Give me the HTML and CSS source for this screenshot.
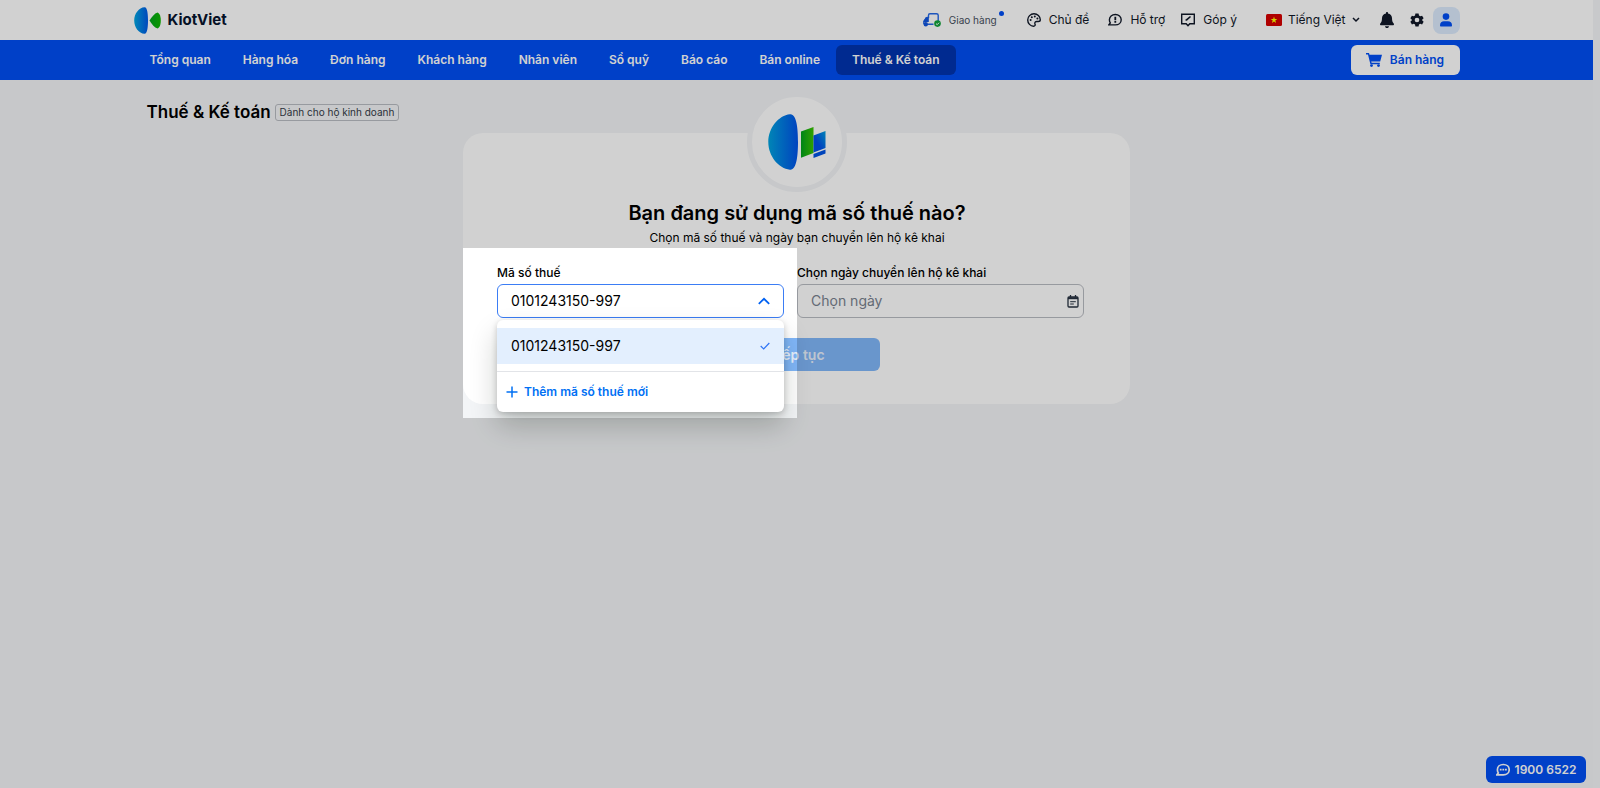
FILE: index.html
```html
<!DOCTYPE html>
<html lang="vi">
<head>
<meta charset="utf-8">
<meta name="viewport" content="width=device-width, initial-scale=1">
<title>KiotViet - Thuế &amp; Kế toán</title>
<link rel="stylesheet" href="styles.css">
</head>
<body>
<div class="page">
  <header class="topbar">
    <div class="container topbar-inner">
      <a class="brand" href="#">
        <svg class="brand-mark" viewBox="0 0 27 27" aria-hidden="true">
          <defs>
            <linearGradient id="blue" x1="0" x2="1"><stop offset="0" stop-color="#00a6e0"/><stop offset="1" stop-color="#0058e8"/></linearGradient>
            <linearGradient id="green" x1="0" x2="1"><stop offset="0" stop-color="#00a51d"/><stop offset="1" stop-color="#10b800"/></linearGradient>
          </defs>
          <path fill="url(#blue)" d="M10.500 .2C13.500 0 14 8 14 13.500s-.5 13.500-3.500 13.300C5 26.500.2 20.500.2 13.500S5 .5 10.500.2z"/>
          <path fill="url(#green)" d="M15.500 13.500c2.500-4 5-7 8-8 2.500 1 3.300 4.500 3.300 8s-.8 7-3.300 8c-3-1-5.500-4-8-8z"/>
        </svg>
        <span class="brand-name">KiotViet</span>
      </a>
      <nav class="tools" aria-label="Tiện ích">
        <a class="tool tool-small" href="#">
          <svg class="icon-truck" viewBox="0 0 18 14" fill="none" aria-hidden="true">
            <path stroke="#2468e6" stroke-width="1.400" d="M4.500 11.300h6M5.500 5V2.200C5.500 1.300 6 .8 7 .8h6.500c1.200 0 1.700.6 1.700 1.500V8M5.500 4.500H4.200C3 4.500 2.700 5 2.200 6.500L.8 8.500V11"/>
            <path fill="#1256df" d="M3 4.500h2.800V9H.8V7.800z"/>
            <circle cx="2.800" cy="11.300" r="2.200" fill="#1256df"/>
            <circle cx="14.500" cy="10.600" r="3.300" fill="#12a43b"/>
            <path stroke="#fff" d="m13 10.600 1.200 1.100 1.900-2"/>
          </svg>
          <span>Giao hàng</span><i class="dot"></i>
        </a>
        <a class="tool tool-theme" href="#">
          <svg class="icon14" viewBox="0 0 14 14" fill="none" stroke="currentColor" stroke-width="1.400" aria-hidden="true">
            <path d="M7 .8C3.500.8.7 3.600.7 7s2.800 6.200 5.800 6.200c1.600 0 1.900-1.200 1.500-2.200-.5-1.500.4-2.500 1.700-2.500h1.600c1.300 0 2-.7 2-1.800C13.200 3.400 10.500.8 7 .8z"/>
            <g fill="currentColor" stroke="none"><circle cx="3.600" cy="7" r="1"/><circle cx="4.800" cy="4.200" r="1"/><circle cx="7.800" cy="3.400" r="1"/><circle cx="10.400" cy="5.400" r="1"/></g>
          </svg>
          <span>Chủ đề</span>
        </a>
        <a class="tool" href="#">
          <svg class="icon14" viewBox="0 0 14 14" fill="none" stroke="currentColor" stroke-width="1.400" aria-hidden="true">
            <path d="M7.300 1.500c3.400 0 5.900 2.200 5.900 5.200s-2.500 5.200-5.900 5.200H.8l1.500-2C1.700 9 1.400 8 1.400 6.700c0-3 2.500-5.200 5.900-5.200z"/>
            <path stroke-width="1.800" d="M7.300 3.700V7.200M7.300 8v1.700"/>
          </svg>
          <span>Hỗ trợ</span>
        </a>
        <a class="tool" href="#">
          <svg class="icon14" viewBox="0 0 14 14" fill="none" stroke="currentColor" stroke-width="1.400" aria-hidden="true">
            <path d="M.7 1.200h12.600v9.600H8.800L7 12.800l-1.800-2H.7z"/>
            <path d="m4.500 8 .5-1.700 4-3.300 1 1-3.800 3.500z" fill="currentColor" stroke="none"/>
          </svg>
          <span>Góp ý</span>
        </a>
        <button class="tool language" type="button">
          <svg class="flag" viewBox="0 0 16 12" aria-hidden="true"><rect width="16" height="12" rx="1.500" fill="#d60000"/><path fill="#ff0" d="m8 2.600.8 2.400h2.500L9.300 6.500l.8 2.400L8 7.400 5.900 8.900l.8-2.400L4.700 5h2.500z"/></svg>
          <span>Tiếng Việt</span>
          <svg class="caret" viewBox="0 0 8 6" fill="none" stroke="currentColor" stroke-width="1.500" aria-hidden="true"><path d="m1 1 3 3 3-3"/></svg>
        </button>
        <button class="icon-button" type="button" aria-label="Thông báo">
          <svg class="icon16" viewBox="0 0 14 16" fill="#101828" aria-hidden="true"><path d="M7 0c.6 0 1 .4 1 1v.4c2.300.4 4 2.300 4 4.600 0 3 .6 4.300 1.700 5.400.6.700.2 1.800-.8 1.800H1.100c-1 0-1.400-1.100-.8-1.800C1.400 10.300 2 9 2 6c0-2.300 1.700-4.200 4-4.600V1c0-.6.400-1 1-1zM5 14.200h4c0 1-.9 1.800-2 1.800s-2-.8-2-1.800z"/></svg>
        </button>
        <button class="icon-button" type="button" aria-label="Thiết lập">
          <svg class="icon14" viewBox="0 0 24 24" fill="#101828" aria-hidden="true"><path fill-rule="evenodd" d="M9.300 1h5.400l.7 3.200 2.200 1.300 3.100-1 2.700 4.700-2.400 2.100v1.400l2.400 2.100-2.700 4.700-3.100-1-2.200 1.300-.7 3.200H9.300l-.7-3.200-2.200-1.300-3.100 1L.6 14.800 3 12.700v-1.400L.6 9.200l2.700-4.700 3.100 1 2.200-1.300zM12 8a4 4 0 1 0 0 8 4 4 0 0 0 0-8z"/></svg>
        </button>
        <button class="avatar" type="button" aria-label="Tài khoản">
          <svg class="icon14" viewBox="0 0 14 14" fill="#004ff5" aria-hidden="true"><circle cx="7" cy="3.600" r="3.300"/><path d="M1 12.200C1 9.800 2.700 8.200 5 8.200h4c2.300 0 4 1.600 4 4 0 .8-.3 1.300-1 1.300H2c-.7 0-1-.5-1-1.300z"/></svg>
        </button>
      </nav>
    </div>
  </header>

  <div class="navbar">
    <div class="container navbar-inner">
      <nav class="menu" aria-label="Chính">
        <a href="#">Tổng quan</a>
        <a href="#">Hàng hóa</a>
        <a href="#">Đơn hàng</a>
        <a href="#">Khách hàng</a>
        <a href="#">Nhân viên</a>
        <a href="#">Sổ quỹ</a>
        <a href="#">Báo cáo</a>
        <a href="#">Bán online</a>
        <a class="active" href="#">Thuế &amp; Kế toán</a>
      </nav>
      <button class="sell" type="button">
        <svg class="cart" viewBox="0 0 16 14" fill="currentColor" aria-hidden="true"><path d="M0 0h3l.5 1.700H16l-1.800 6.800H5.200l.4 1.300h8.200v1.400H4.400L2 1.400H0z"/><circle cx="5.500" cy="12.600" r="1.400"/><circle cx="12.500" cy="12.600" r="1.400"/></svg>
        <span>Bán hàng</span>
      </button>
    </div>
  </div>

  <main class="container content">
    <div class="heading">
      <h1>Thuế &amp; Kế toán</h1>
      <span class="tag">Dành cho hộ kinh doanh</span>
    </div>
    <section class="card">
      <div class="emblem">
        <svg viewBox="0 0 58 56" aria-hidden="true">
          <defs>
            <linearGradient id="blue-big" x1="0" x2="1"><stop offset="0" stop-color="#00a3df"/><stop offset="1" stop-color="#0052ea"/></linearGradient>
            <linearGradient id="green-big" x1="0" x2="1"><stop offset="0" stop-color="#00a21c"/><stop offset="1" stop-color="#3ac400"/></linearGradient>
            <linearGradient id="bar-blue" x1="0" y1="1" x2="1" y2="0"><stop offset="0.400" stop-color="#0050ea"/><stop offset="1" stop-color="#00a0df"/></linearGradient>
          </defs>
          <path fill="url(#blue-big)" d="M22 .3C28.500-.5 30 14 30 28s-1.500 28.500-8 27.700C10.500 54.500.3 42 .3 28S10.500 1.500 22 .3z"/>
          <path fill="url(#green-big)" d="M33 17.500 45.500 13v26L33 43.700z"/>
          <path fill="url(#bar-blue)" d="M45.500 21.500 57.500 17v17L45.500 38.500z"/>
          <path fill="#0053e4" d="M45.500 40 57.500 35.500v4L45.500 44z"/>
        </svg>
      </div>
      <h2>Bạn đang sử dụng mã số thuế nào?</h2>
      <p class="lead">Chọn mã số thuế và ngày bạn chuyển lên hộ kê khai</p>
      <form class="form">
        <div class="fields">
          <div class="field">
            <label for="tax-code">Mã số thuế</label>
            <div class="control control-open">
              <input id="tax-code" type="text" role="combobox" aria-expanded="true" aria-controls="tax-options" value="0101243150-997">
              <svg class="chevron" viewBox="0 0 12 8" fill="none" stroke="#0061f2" stroke-width="1.800" aria-hidden="true"><path d="m.8 6.800 5.200-5 5.200 5"/></svg>
            </div>
            <div class="dropdown">
              <ul class="options" id="tax-options" role="listbox">
                <li class="option" role="option" aria-selected="true">
                  <span>0101243150-997</span>
                  <svg class="check" viewBox="0 0 10 8" fill="none" stroke="#2f74f5" stroke-width="1.200" aria-hidden="true"><path d="m.7 4 3 3L9.300 1"/></svg>
                </li>
              </ul>
              <button class="add" type="button">
                <svg class="plus" viewBox="0 0 12 12" fill="none" stroke="currentColor" stroke-width="1.500" aria-hidden="true"><path d="M6 .5v11M.5 6h11"/></svg>
                <span>Thêm mã số thuế mới</span>
              </button>
            </div>
            <div class="spotlight"></div>
          </div>
          <div class="field">
            <label for="start-date">Chọn ngày chuyển lên hộ kê khai</label>
            <div class="control">
              <input id="start-date" type="text" placeholder="Chọn ngày">
              <svg class="calendar" viewBox="0 0 12 13" fill="none" stroke="#283342" stroke-width="1.300" aria-hidden="true"><rect x="1" y="2" width="10" height="10" rx="1"/><path d="M1 3.200h10" stroke-width="2"/><path d="M3.500 0v2.500M8.500 0v2.500"/><path d="M3.200 6.700h5.600M3.200 9h3.600" stroke-width="1"/></svg>
            </div>
          </div>
        </div>
        <button class="submit" type="submit">Tiếp tục</button>
      </form>
    </section>
  </main>

  <a class="hotline" href="tel:19006522">
    <svg class="icon14" viewBox="0 0 14 14" fill="none" stroke="currentColor" stroke-width="1.700" aria-hidden="true"><path d="M7.300 1.500c3.400 0 5.900 2.200 5.900 5.200s-2.500 5.200-5.900 5.200H.8l1.500-2C1.700 9 1.400 8 1.400 6.700c0-3 2.500-5.200 5.900-5.200z"/><path d="M3.800 6.700h1.800M6.400 6.700h1.800M9 6.700h1.800"/></svg>
    <span>1900 6522</span>
  </a>
</div>
</body>
</html>
```
FILE: styles.css
```css
* {
  box-sizing: border-box;
}

body {
  margin: 0;
  background: #f5f6f8;
  color: #000;
  font: 13px/20px Inter, "Noto Sans", sans-serif;
}

a {
  color: inherit;
  text-decoration: none;
}

button,
input {
  font: inherit;
  color: inherit;
  border: 0;
  padding: 0;
  margin: 0;
  background: none;
}

button {
  cursor: pointer;
}

svg {
  display: block;
  flex: none;
}

.page {
  min-height: 100vh;
  margin-right: 7px;
  background: #f3f5f7;
}

.container {
  width: 100%;
  max-width: 1326px;
  margin: 0 auto;
}

/* Top bar */
.topbar {
  background: #fff;
}

.topbar-inner {
  display: flex;
  align-items: center;
  justify-content: space-between;
  height: 40px;
}

.brand {
  display: flex;
  align-items: center;
  gap: 7px;
}

.brand-mark {
  width: 27px;
  height: 27px;
}

.brand-name {
  color: #07142e;
  font-size: 15px;
  font-weight: 700;
}

.tools {
  display: flex;
  align-items: center;
}

.tool {
  position: relative;
  display: flex;
  align-items: center;
  gap: 8px;
  margin-right: 16px;
  font-size: 12px;
  color: #101828;
}

.tool-small {
  margin-right: 30px;
  font-size: 10px;
  color: #485160;
}

.tool-theme {
  margin-right: 19px;
}

.dot {
  position: absolute;
  top: 1px;
  right: -7px;
  width: 5px;
  height: 5px;
  border-radius: 50%;
  background: #004ff5;
}

.icon-truck {
  width: 18px;
  height: 14px;
}

.icon14 {
  width: 14px;
  height: 14px;
}

.icon16 {
  width: 14px;
  height: 16px;
}

.flag {
  width: 16px;
  height: 12px;
}

.caret {
  width: 8px;
  height: 6px;
}

.language {
  gap: 6px;
  margin-left: 13px;
  margin-right: 20px;
}

.icon-button {
  margin-right: 16px;
}

.icon-button + .avatar {
  margin-left: -7px;
}

.avatar {
  display: grid;
  place-items: center;
  width: 27px;
  height: 27px;
  border-radius: 8px;
  background: #dcebfd;
}

/* Main navigation */
.navbar {
  background: #004ff5;
}

.navbar-inner {
  display: flex;
  align-items: center;
  justify-content: space-between;
  height: 40px;
}

.menu {
  display: flex;
  color: #fff;
  font-size: 12px;
  font-weight: 600;
}

.menu a {
  padding: 5px 16px;
  border-radius: 6px;
}

.menu .active {
  background: #0034b0;
}

.sell {
  display: flex;
  align-items: center;
  justify-content: center;
  gap: 8px;
  width: 109px;
  height: 30px;
  border-radius: 6px;
  background: #fff;
  color: #004ff5;
  font-size: 12px;
  font-weight: 600;
}

.cart {
  width: 16px;
  height: 14px;
}

/* Content */
.content {
  padding-top: 20px;
}

.heading {
  display: flex;
  align-items: center;
  gap: 4px;
  padding-left: 13px;
}

h1 {
  margin: 0;
  font-size: 17px;
  line-height: 24px;
  font-weight: 600;
}

.tag {
  padding: 0 4px;
  border: 1px solid #b9bcc2;
  border-radius: 3px;
  color: #343b47;
  font-size: 10px;
  line-height: 15px;
}

.card {
  display: flex;
  flex-direction: column;
  align-items: center;
  width: 667px;
  max-width: 100%;
  margin: 9px auto 0;
  padding: 0 33px 33px 34px;
  border-radius: 20px;
  background: #fff;
}

.emblem {
  display: grid;
  place-items: center;
  width: 100px;
  height: 100px;
  margin-top: -41px;
  border: 5px solid #f3f5f7;
  border-radius: 50%;
  background: #fff;
}

.emblem svg {
  width: 58px;
  height: 56px;
}

h2 {
  margin: 7px 0 0;
  font-size: 20px;
  line-height: 28px;
  font-weight: 600;
}

.lead {
  margin: 0;
  padding-top: 1px;
  font-size: 12px;
}

.form {
  display: flex;
  flex-direction: column;
  align-items: center;
  width: 100%;
  margin-top: 15px;
}

.fields {
  display: grid;
  grid-template-columns: 1fr 1fr;
  width: 100%;
}

.field {
  position: relative;
  padding-right: 13px;
}

.field label {
  display: block;
  padding-bottom: 1px;
  font-size: 12px;
  font-weight: 500;
}

.control {
  display: flex;
  align-items: center;
  height: 34px;
  padding: 0 4px 0 13px;
  border: 1px solid #b9bcc2;
  border-radius: 6px;
  background: #fff;
  font-size: 14px;
}

.control-open {
  padding-right: 13px;
  border-color: #3b7df5;
}

.control input {
  flex: 1;
  min-width: 0;
  outline: 0;
}

.control input::placeholder {
  color: #7a828f;
  opacity: 1;
}

.chevron {
  width: 12px;
  height: 8px;
}

.calendar {
  width: 12px;
  height: 13px;
}

.dropdown {
  position: absolute;
  z-index: 2;
  top: 57px;
  left: 0;
  right: 13px;
  padding-top: 8px;
  border-radius: 6px;
  background: #fff;
  box-shadow: 0 2px 6px rgba(0, 0, 0, 0.2), 0 14px 28px rgba(0, 20, 0, 0.2);
}

.options {
  margin: 0;
  padding: 0 0 7px;
  border-bottom: 1px solid #e2e4e8;
  list-style: none;
}

.option {
  display: flex;
  align-items: center;
  justify-content: space-between;
  height: 36px;
  padding: 0 14px;
  background: #e3effe;
  font-size: 14px;
}

.check {
  width: 10px;
  height: 8px;
}

.add {
  display: flex;
  align-items: center;
  gap: 6px;
  width: 100%;
  height: 40px;
  padding-left: 9px;
  color: #0070f4;
  font-size: 12px;
  font-weight: 600;
}

.plus {
  width: 12px;
  height: 12px;
}

/* Guided tour highlight: dims everything outside its box */
.spotlight {
  position: absolute;
  z-index: 10;
  top: -15px;
  left: -34px;
  right: 0;
  height: 170px;
  box-shadow: 0 0 0 2000px rgba(0, 0, 0, 0.18);
  pointer-events: none;
}

.submit {
  width: 166px;
  height: 33px;
  margin-top: 20px;
  border-radius: 6px;
  background: #81b7f9;
  color: #e8f1fe;
  font-size: 14px;
  font-weight: 600;
}

.hotline {
  position: fixed;
  right: 14px;
  bottom: 5px;
  display: flex;
  align-items: center;
  justify-content: center;
  gap: 5px;
  width: 100px;
  height: 27px;
  border-radius: 6px;
  background: #004ff5;
  color: #fff;
  font-size: 12px;
  font-weight: 600;
}
```
